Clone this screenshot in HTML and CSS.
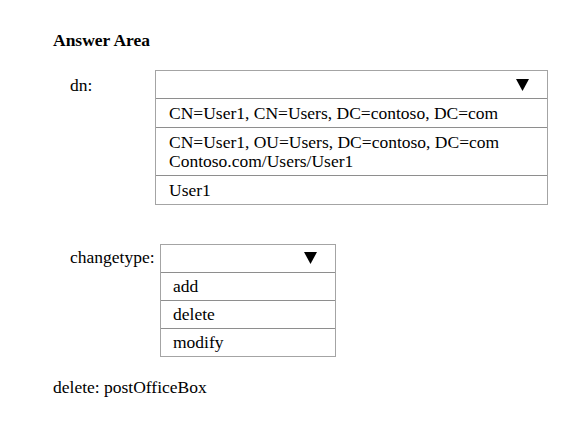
FILE: index.html
```html
<!DOCTYPE html>
<html>
<head>
<meta charset="utf-8">
<link rel="stylesheet" href="styles.css">
</head>
<body>
<div class="page">
  <div class="title">Answer Area</div>
  <div class="field field-dn">
    <div class="label label-dn">dn:</div>
    <div class="box box-dn">
      <div class="head"><svg class="arrow" width="13" height="12" viewBox="0 0 13 12"><polygon points="0,0 13,0 6.5,12" fill="#000"/></svg></div>
      <div class="opt">CN=User1, CN=Users, DC=contoso, DC=com</div>
      <div class="opt">CN=User1, OU=Users, DC=contoso, DC=com<br>Contoso.com/Users/User1</div>
      <div class="opt">User1</div>
    </div>
  </div>
  <div class="field field-ct">
    <div class="label label-ct">changetype:</div>
    <div class="box box-ct">
      <div class="head"><svg class="arrow" width="13" height="12" viewBox="0 0 13 12"><polygon points="0,0 13,0 6.5,12" fill="#000"/></svg></div>
      <div class="opt">add</div>
      <div class="opt">delete</div>
      <div class="opt">modify</div>
    </div>
  </div>
  <div class="footer">delete: postOfficeBox</div>
</div>
</body>
</html>
```
FILE: styles.css
```css
html, body { margin: 0; padding: 0; background: #fff; }
body { font-family: "Liberation Serif", "Times New Roman", serif; color: #000; font-size: 17.5px; line-height: 19px; }
.page { padding: 31px 0 0 53px; }
.title { font-weight: bold; }
.field { display: flex; align-items: flex-start; }
.field-dn { margin-top: 20px; }
.label { box-sizing: border-box; padding-left: 17px; }
.label-dn { width: 102px; padding-top: 6px; }
.box { border: 1px solid #a4a4a4; }
.box-dn { width: 391px; }
.head { height: 27px; border-bottom: 1px solid #8e8e8e; display: flex; justify-content: flex-end; align-items: flex-start; }
.arrow { display: block; margin-top: 8px; }
.box-dn .arrow { margin-right: 18px; }
.opt { padding: 5px 0 4px 13px; border-bottom: 1px solid #8e8e8e; white-space: nowrap; }
.opt:last-child { border-bottom: none; }
.field-ct { margin-top: 39px; }
.label-ct { width: 107px; padding-top: 4px; }
.box-ct { width: 174px; }
.box-ct .arrow { margin-right: 18px; margin-top: 7px; }
.box-ct .opt { padding: 4px 0 4px 12px; }
.box-ct .opt:first-of-type { padding-top: 5px; }
.footer { margin-top: 21px; }
```
